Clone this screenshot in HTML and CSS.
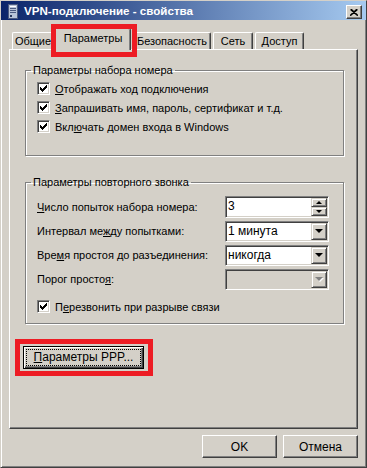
FILE: index.html
```html
<!DOCTYPE html>
<html>

<head>
    <title>VPN-подключение - свойства</title>
    <link rel="stylesheet" href="styles.css">
</head>

<body>
    <div class="window">
        <div class="titlebar">
            <svg class="title-icon" width="10" height="15" viewBox="0 0 10 15">
                <rect x="0.5" y="0.5" width="9" height="14" fill="#b8c4d8" stroke="#4a5a80"/>
                <rect x="2" y="2" width="6" height="1" fill="#ffffff"/>
                <rect x="2" y="4" width="6" height="1" fill="#4a5a80"/>
                <rect x="2" y="6" width="6" height="1" fill="#4a5a80"/>
                <rect x="2" y="8" width="6" height="1" fill="#4a5a80"/>
                <rect x="2" y="11" width="2" height="2" fill="#2a3a60"/>
            </svg>
            <span class="title">VPN-подключение - свойства</span>
            <button class="close-btn">
                <svg width="8" height="7" viewBox="0 0 8 7">
                    <path d="M0.5 0.5 L7.5 6.5 M7.5 0.5 L0.5 6.5 M1.5 0.5 L8 6.5 M6.5 0.5 L0 6.5" stroke="#000" stroke-width="1.2"/>
                </svg>
            </button>
        </div>

        <div class="tabs">
            <div class="tab tab-general">Общие</div>
            <div class="tab tab-params active marked">Параметры</div>
            <div class="tab tab-security">Безопасность</div>
            <div class="tab tab-net">Сеть</div>
            <div class="tab tab-access">Доступ</div>
        </div>

        <div class="panel">
            <fieldset class="group group-dial">
                <legend>Параметры набора номера</legend>
                <label class="check-row"><span class="checkbox checked"></span><span><u>О</u>тображать ход подключения</span></label>
                <label class="check-row"><span class="checkbox checked"></span><span><u>З</u>апрашивать имя, пароль, сертификат и т.д.</span></label>
                <label class="check-row"><span class="checkbox checked"></span><span>Вкл<u>ю</u>чать домен входа в Windows</span></label>
            </fieldset>

            <fieldset class="group group-redial">
                <legend>Параметры повторного звонка</legend>
                <div class="field-row">
                    <span class="field-label"><u>Ч</u>исло попыток набора номера:</span>
                    <div class="sunken spin">
                        <span class="value spin-value">3</span>
                        <span class="spin-buttons">
                            <span class="mini-btn"><span class="arrow-up"></span></span>
                            <span class="mini-btn"><span class="arrow-down-small"></span></span>
                        </span>
                    </div>
                </div>
                <div class="field-row">
                    <span class="field-label">Интервал ме<u>ж</u>ду попытками:</span>
                    <div class="sunken combo">
                        <span class="value">1 минута</span>
                        <span class="drop-btn"><span class="arrow-down"></span></span>
                    </div>
                </div>
                <div class="field-row">
                    <span class="field-label">Вре<u>м</u>я простоя до разъединения:</span>
                    <div class="sunken combo">
                        <span class="value">никогда</span>
                        <span class="drop-btn"><span class="arrow-down"></span></span>
                    </div>
                </div>
                <div class="field-row">
                    <span class="field-label">Порог просто<u>я</u>:</span>
                    <div class="sunken combo disabled">
                        <span class="value"></span>
                        <span class="drop-btn"><span class="arrow-down"></span></span>
                    </div>
                </div>
                <label class="check-row check-redial"><span class="checkbox checked"></span><span>П<u>е</u>резвонить при разрыве связи</span></label>
            </fieldset>

            <button class="btn btn-default btn-ppp marked"><span class="focus-rect"><u>П</u>араметры PPP...</span></button>
        </div>

        <div class="actions">
            <button class="btn btn-dialog">OK</button>
            <button class="btn btn-dialog">Отмена</button>
        </div>
    </div>
</body>

</html>
```

FILE: styles.css
```css
* {
    box-sizing: border-box;
}

body {
    margin: 0;
    font-family: 'Liberation Sans', Arial, sans-serif;
    font-size: 11px;
    color: #000;
    background: #d4d0c8;
}

u {
    text-decoration-thickness: 1px;
    text-underline-offset: 1px;
}

.window {
    width: 367px;
    height: 468px;
    background: #d4d0c8;
    border: 1px solid;
    border-color: #d4d0c8 #404040 #404040 #d4d0c8;
    box-shadow: inset 1px 1px #fff, inset -1px -1px #808080;
}

/* title bar */
.titlebar {
    height: 19px;
    display: flex;
    align-items: center;
    padding-left: 7px;
    background: linear-gradient(to right, #0a246a, #a6caf0);
}

.title-icon {
    margin-top: 1px;
}

.title {
    margin-left: 6px;
    color: #fff;
    font-weight: bold;
    font-size: 11.6px;
}

.close-btn {
    width: 16px;
    height: 14px;
    margin: 3px 4px 0 auto;
    padding: 0;
    display: flex;
    align-items: center;
    justify-content: center;
    background: #d4d0c8;
    border: 1px solid;
    border-color: #fff #404040 #404040 #fff;
    box-shadow: inset -1px -1px #808080;
}

/* tabs */
.tabs {
    position: relative;
    z-index: 1;
    display: flex;
    align-items: flex-end;
    height: 21px;
    margin: 8px 0 0 11px;
}

.tab {
    height: 17px;
    padding-top: 2px;
    text-align: center;
    background: #d4d0c8;
    border-top: 1px solid #fff;
    border-left: 1px solid #fff;
    border-right: 1px solid #404040;
    border-radius: 2px 2px 0 0;
    box-shadow: inset -1px 0 #808080;
}

.tab-general {
    width: 42px;
}

.tab.active {
    width: 76px;
    height: 22px;
    margin-left: 1px;
    margin-bottom: -1px;
    padding-top: 3px;
}

.tab-security {
    width: 78px;
    margin-left: 2px;
}

.tab-net {
    width: 40px;
    margin-left: 2px;
}

.tab-access {
    width: 49px;
    margin-left: 2px;
}

/* red annotation frames */
.marked {
    position: relative;
}

.marked::after {
    content: "";
    position: absolute;
    border: 5px solid #ed1c24;
    pointer-events: none;
}

.tab.marked::after {
    left: -5px;
    top: -5px;
    right: -7px;
    bottom: -7px;
}

.btn-ppp.marked::after {
    left: -9px;
    top: -8px;
    right: -10px;
    bottom: -8px;
}

/* panel */
.panel {
    width: 349px;
    height: 380px;
    margin-left: 8px;
    padding: 0;
    border: 1px solid;
    border-color: #fff #404040 #404040 #fff;
    box-shadow: inset -1px -1px #808080;
}

.group {
    width: 319px;
    margin: 0 0 0 15px;
    padding: 0 10px 0 11px;
    border: 1px solid #808080;
    box-shadow: inset 1px 1px #fff, 1px 1px #fff;
}

.group legend {
    padding: 0 2px;
    margin-left: -6px;
    line-height: 13px;
}

.group-dial {
    height: 92px;
    margin-top: 14px;
    padding-top: 2px;
}

.group-redial {
    height: 148px;
    margin-top: 20px;
    padding-top: 6px;
}

.check-row {
    display: flex;
    align-items: center;
    gap: 5px;
    height: 19px;
}

.check-redial {
    margin-top: 6px;
}

.checkbox {
    width: 13px;
    height: 13px;
    background: #fff;
    border: 1px solid;
    border-color: #808080 #fff #fff #808080;
    box-shadow: inset 1px 1px #404040, inset -1px -1px #d4d0c8;
}

.checkbox.checked {
    background: #fff url("data:image/svg+xml,%3Csvg xmlns='http://www.w3.org/2000/svg' width='11' height='11'%3E%3Cpath d='M2 4h1v1h1v1h1V5h1V4h1V3h1V2h1v3H8v1H7v1H6v1H5v1H4V8H3V7H2z' fill='%23000'/%3E%3C/svg%3E") no-repeat 0 0;
}

.field-row {
    display: flex;
    align-items: center;
    height: 24px;
}

.field-label {
    width: 188px;
}

.sunken {
    display: flex;
    width: 104px;
    height: 21px;
    padding: 1px;
    background: #fff;
    border: 1px solid;
    border-color: #808080 #fff #fff #808080;
    box-shadow: inset 1px 1px #404040, inset -1px -1px #d4d0c8;
}

.value {
    flex: 1;
    padding-left: 1px;
    align-self: center;
    font-size: 12px;
}

.spin {
    height: 22px;
}

.spin-value {
    align-self: flex-start;
    padding-top: 1px;
}

.spin-buttons {
    display: flex;
    flex-direction: column;
    width: 16px;
}

.mini-btn,
.drop-btn {
    display: flex;
    align-items: center;
    justify-content: center;
    background: #d4d0c8;
    border: 1px solid;
    border-color: #d4d0c8 #404040 #404040 #d4d0c8;
    box-shadow: inset 1px 1px #fff, inset -1px -1px #808080;
}

.mini-btn {
    flex: 1;
}

.drop-btn {
    width: 16px;
}

.arrow-up,
.arrow-down-small,
.arrow-down {
    width: 0;
    height: 0;
    border-left: 3px solid transparent;
    border-right: 3px solid transparent;
}

.arrow-up {
    border-bottom: 3px solid #000;
}

.arrow-down-small {
    border-top: 3px solid #000;
}

.arrow-down {
    border-left-width: 4px;
    border-right-width: 4px;
    border-top: 4px solid #000;
}

.combo.disabled {
    background: #d4d0c8;
}

.combo.disabled .arrow-down {
    border-top-color: #808080;
    filter: drop-shadow(1px 1px 0 #fff);
}

/* buttons */
.btn {
    font: inherit;
    color: #000;
    background: #d4d0c8;
    border: 1px solid;
    border-color: #fff #404040 #404040 #fff;
    box-shadow: inset -1px -1px #808080;
    padding: 0;
}

.btn-default {
    border-color: #000;
    box-shadow: inset 1px 1px #fff, inset -1px -1px #404040, inset -2px -2px #808080;
}

.btn-ppp {
    display: block;
    width: 121px;
    height: 23px;
    margin: 22px 0 0 13px;
    padding: 3px;
    font-size: 12px;
}

.focus-rect {
    display: block;
    height: 100%;
    line-height: 15px;
    outline: 1px dotted #000;
}

.actions {
    display: flex;
    justify-content: flex-end;
    gap: 6px;
    margin-top: 6px;
    padding-right: 8px;
}

.btn-dialog {
    width: 75px;
    height: 23px;
    font-size: 12px;
}
```
